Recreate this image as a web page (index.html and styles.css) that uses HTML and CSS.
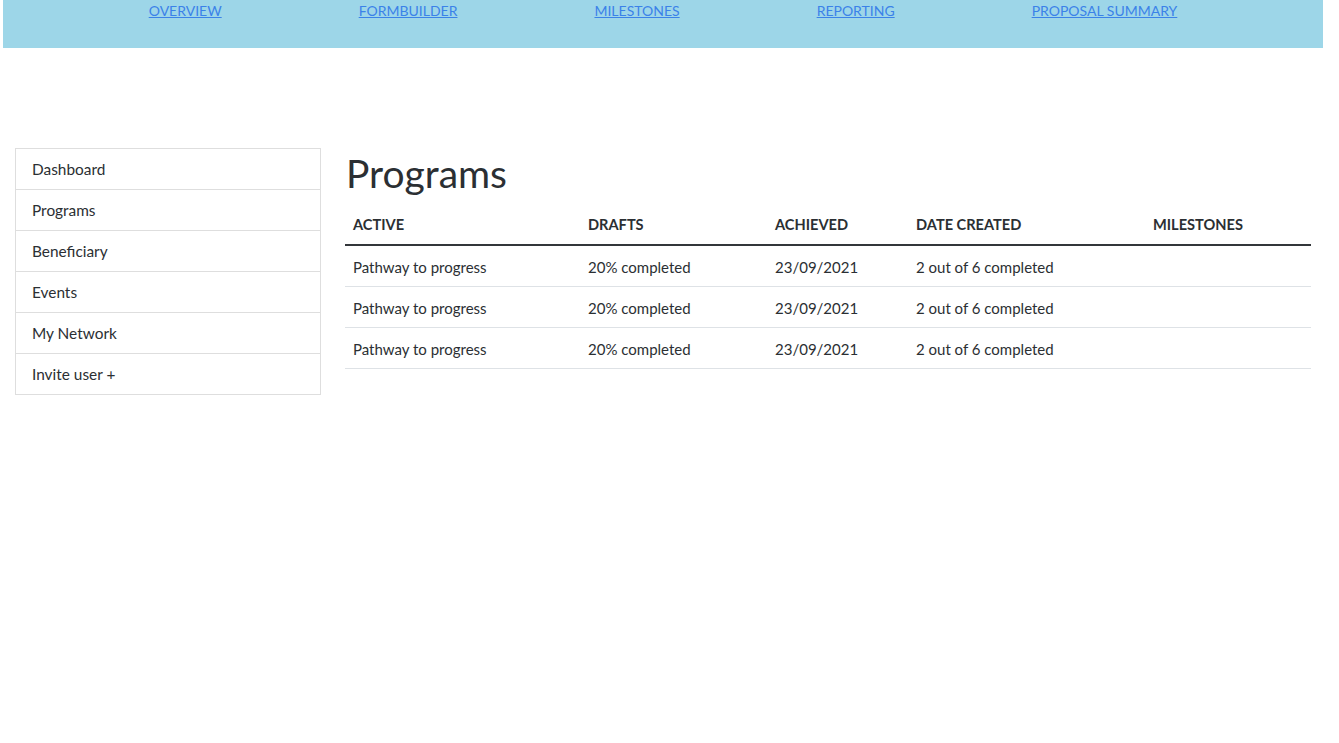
FILE: index.html
```html
<!DOCTYPE html>
<html>
<head>
<meta charset="utf-8">
<link rel="stylesheet" href="styles.css">
</head>
<body>
<header class="topbar">
  <nav class="topnav">
    <a href="#">OVERVIEW</a>
    <a href="#">FORMBUILDER</a>
    <a href="#">MILESTONES</a>
    <a href="#">REPORTING</a>
    <a href="#">PROPOSAL SUMMARY</a>
  </nav>
</header>
<div class="layout">
  <aside class="sidebar">
    <ul class="side-list">
      <li>Dashboard</li>
      <li>Programs</li>
      <li>Beneficiary</li>
      <li>Events</li>
      <li>My Network</li>
      <li>Invite user +</li>
    </ul>
  </aside>
  <main class="content">
    <h1 class="title">Programs</h1>
    <table class="table">
      <thead>
        <tr>
          <th class="c1">ACTIVE</th>
          <th class="c2">DRAFTS</th>
          <th class="c3">ACHIEVED</th>
          <th class="c4">DATE CREATED</th>
          <th class="c5">MILESTONES</th>
        </tr>
      </thead>
      <tbody>
        <tr><td>Pathway to progress</td><td>20% completed</td><td>23/09/2021</td><td>2 out of 6 completed</td><td></td></tr>
        <tr><td>Pathway to progress</td><td>20% completed</td><td>23/09/2021</td><td>2 out of 6 completed</td><td></td></tr>
        <tr><td>Pathway to progress</td><td>20% completed</td><td>23/09/2021</td><td>2 out of 6 completed</td><td></td></tr>
      </tbody>
    </table>
  </main>
</div>
</body>
</html>
```
FILE: styles.css
```css
* { box-sizing: border-box; }
html, body { margin: 0; padding: 0; background: #fff; }
body {
  font-family: "Source Sans Pro", Lato, "Liberation Sans", sans-serif;
  color: #2b2f33;
  font-size: 15.4px;
}
.topbar {
  margin-left: 3px;
  width: 1320px;
  height: 48px;
  background: #9dd6e8;
}
.topnav {
  display: flex;
  justify-content: center;
  gap: 137px;
  padding-top: 2px;
}
.topnav a {
  color: #3b82e8;
  text-decoration: underline;
  font-size: 14px;
  line-height: 18px;
}
.layout {
  display: flex;
  align-items: flex-start;
  gap: 24px;
  padding: 100px 28px 0 15px;
}
.sidebar {
  width: 306px;
  flex: none;
  border: 1px solid #dedede;
}
.side-list {
  list-style: none;
  margin: 0;
  padding: 0;
}
.side-list li {
  height: 41px;
  line-height: 40px;
  padding-left: 16px;
  border-top: 1px solid #dedede;
}
.side-list li:first-child { border-top: none; height: 40px; }
.content {
  flex: 1;
  width: 966px;
}
.title {
  margin: 1px 0 0 1px;
  font-size: 39px;
  font-weight: 400;
  line-height: 48px;
  color: #2b2f33;
}
.table {
  width: 966px;
  border-collapse: collapse;
  margin-top: 8px;
  font-size: 15px;
}
.table th {
  text-align: left;
  font-weight: 700;
  font-size: 14.6px;
  height: 40px;
  padding: 0 8px 1px;
  vertical-align: middle;
  border-bottom: 2px solid #33363a;
}
.table td {
  height: 41px;
  padding: 2px 8px 0;
  vertical-align: middle;
  border-bottom: 1px solid #dee2e6;
}
.c1 { width: 235px; }
.c2 { width: 187px; }
.c3 { width: 141px; }
.c4 { width: 237px; }
.c5 { width: 166px; }
```
